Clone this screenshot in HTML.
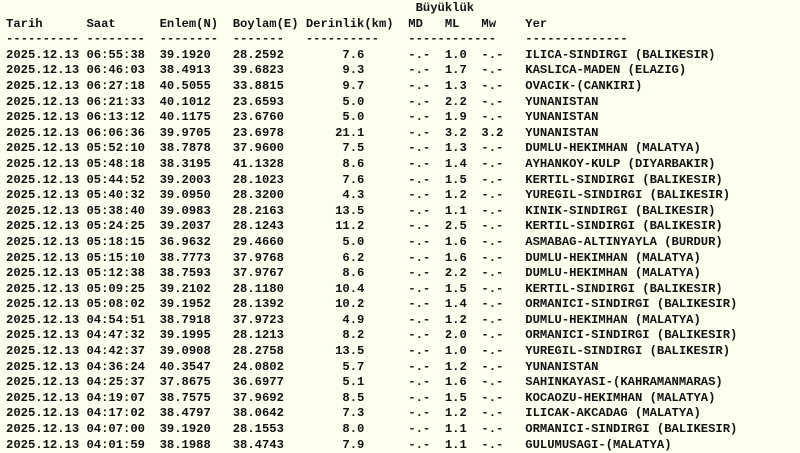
<!DOCTYPE html>
<html><head><meta charset="utf-8"><style>
html,body{margin:0;padding:0;background:#fffff0;width:800px;height:453px;overflow:hidden}
pre{margin:0;padding:0 0 0 6px;font-family:"Liberation Mono",monospace;font-weight:bold;font-size:12.2px;line-height:15.6px;color:#111;position:relative;top:1px}
</style></head><body><pre>                                                        Büyüklük
Tarih      Saat      Enlem(N)  Boylam(E) Derinlik(km)  MD   ML   Mw    Yer
---------- --------  --------  -------   ----------    ------------    --------------
2025.12.13 06:55:38  39.1920   28.2592        7.6      -.-  1.0  -.-   ILICA-SINDIRGI (BALIKESIR)
2025.12.13 06:46:03  38.4913   39.6823        9.3      -.-  1.7  -.-   KASLICA-MADEN (ELAZIG)
2025.12.13 06:27:18  40.5055   33.8815        9.7      -.-  1.3  -.-   OVACIK-(CANKIRI)
2025.12.13 06:21:33  40.1012   23.6593        5.0      -.-  2.2  -.-   YUNANISTAN
2025.12.13 06:13:12  40.1175   23.6760        5.0      -.-  1.9  -.-   YUNANISTAN
2025.12.13 06:06:36  39.9705   23.6978       21.1      -.-  3.2  3.2   YUNANISTAN
2025.12.13 05:52:10  38.7878   37.9600        7.5      -.-  1.3  -.-   DUMLU-HEKIMHAN (MALATYA)
2025.12.13 05:48:18  38.3195   41.1328        8.6      -.-  1.4  -.-   AYHANKOY-KULP (DIYARBAKIR)
2025.12.13 05:44:52  39.2003   28.1023        7.6      -.-  1.5  -.-   KERTIL-SINDIRGI (BALIKESIR)
2025.12.13 05:40:32  39.0950   28.3200        4.3      -.-  1.2  -.-   YUREGIL-SINDIRGI (BALIKESIR)
2025.12.13 05:38:40  39.0983   28.2163       13.5      -.-  1.1  -.-   KINIK-SINDIRGI (BALIKESIR)
2025.12.13 05:24:25  39.2037   28.1243       11.2      -.-  2.5  -.-   KERTIL-SINDIRGI (BALIKESIR)
2025.12.13 05:18:15  36.9632   29.4660        5.0      -.-  1.6  -.-   ASMABAG-ALTINYAYLA (BURDUR)
2025.12.13 05:15:10  38.7773   37.9768        6.2      -.-  1.6  -.-   DUMLU-HEKIMHAN (MALATYA)
2025.12.13 05:12:38  38.7593   37.9767        8.6      -.-  2.2  -.-   DUMLU-HEKIMHAN (MALATYA)
2025.12.13 05:09:25  39.2102   28.1180       10.4      -.-  1.5  -.-   KERTIL-SINDIRGI (BALIKESIR)
2025.12.13 05:08:02  39.1952   28.1392       10.2      -.-  1.4  -.-   ORMANICI-SINDIRGI (BALIKESIR)
2025.12.13 04:54:51  38.7918   37.9723        4.9      -.-  1.2  -.-   DUMLU-HEKIMHAN (MALATYA)
2025.12.13 04:47:32  39.1995   28.1213        8.2      -.-  2.0  -.-   ORMANICI-SINDIRGI (BALIKESIR)
2025.12.13 04:42:37  39.0908   28.2758       13.5      -.-  1.0  -.-   YUREGIL-SINDIRGI (BALIKESIR)
2025.12.13 04:36:24  40.3547   24.0802        5.7      -.-  1.2  -.-   YUNANISTAN
2025.12.13 04:25:37  37.8675   36.6977        5.1      -.-  1.6  -.-   SAHINKAYASI-(KAHRAMANMARAS)
2025.12.13 04:19:07  38.7575   37.9692        8.5      -.-  1.5  -.-   KOCAOZU-HEKIMHAN (MALATYA)
2025.12.13 04:17:02  38.4797   38.0642        7.3      -.-  1.2  -.-   ILICAK-AKCADAG (MALATYA)
2025.12.13 04:07:00  39.1920   28.1553        8.0      -.-  1.1  -.-   ORMANICI-SINDIRGI (BALIKESIR)
2025.12.13 04:01:59  38.1988   38.4743        7.9      -.-  1.1  -.-   GULUMUSAGI-(MALATYA)
</pre></body></html>
